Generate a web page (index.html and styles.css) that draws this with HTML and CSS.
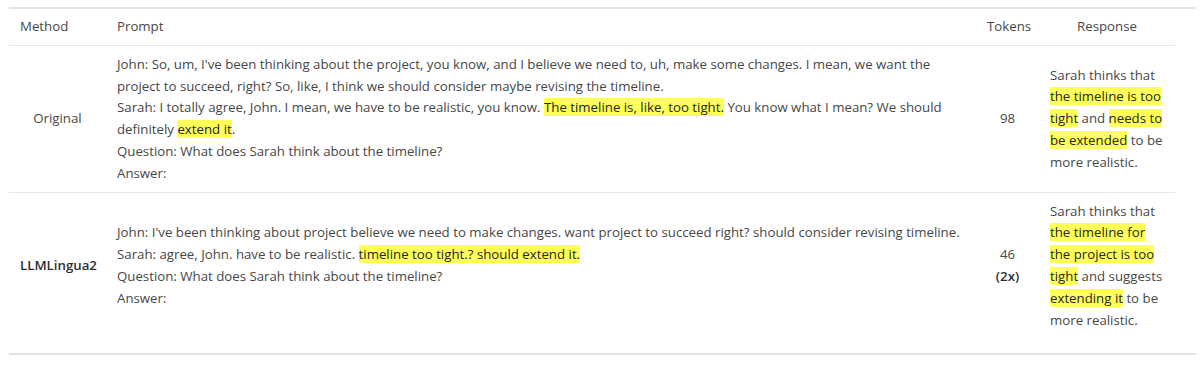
FILE: index.html
```html
<!DOCTYPE html>
<html>
<head>
<meta charset="utf-8">
<link rel="stylesheet" href="styles.css">
</head>
<body>
<div class="figure">
  <table class="cmp">
    <colgroup>
      <col class="c-method">
      <col class="c-prompt">
      <col class="c-tokens">
      <col class="c-resp">
    </colgroup>
    <thead>
      <tr>
        <th class="h-left">Method</th>
        <th class="h-left">Prompt</th>
        <th class="h-center">Tokens</th>
        <th class="h-center">Response</th>
      </tr>
    </thead>
    <tbody>
      <tr class="sep">
        <td class="method">Original</td>
        <td class="prompt">
          <div>John: So, um, I've been thinking about the project, you know, and I believe we need to, uh, make some changes. I mean, we want the project to succeed, right? So, like, I think we should consider maybe revising the timeline.</div>
          <div>Sarah: I totally agree, John. I mean, we have to be realistic, you know. <span class="hl">The timeline is, like, too tight.</span> You know what I mean? We should definitely <span class="hl">extend it</span>.</div>
          <div>Question: What does Sarah think about the timeline?</div>
          <div>Answer:</div>
        </td>
        <td class="tokens">98</td>
        <td class="resp">Sarah thinks that <span class="hl">the timeline is too tight</span> and <span class="hl">needs to be extended</span> to be more realistic.</td>
      </tr>
      <tr>
        <td class="method bold">LLMLingua2</td>
        <td class="prompt">
          <div>John: I've been thinking about project believe we need to make changes. want project to succeed right? should consider revising timeline.</div>
          <div>Sarah: agree, John. have to be realistic. <span class="hl">timeline too tight.? should extend it.</span></div>
          <div>Question: What does Sarah think about the timeline?</div>
          <div>Answer:</div>
        </td>
        <td class="tokens">46<br><b>(2x)</b></td>
        <td class="resp">Sarah thinks that <span class="hl">the timeline for the project is too tight</span> and suggests <span class="hl">extending it</span> to be more realistic.</td>
      </tr>
    </tbody>
  </table>
</div>
</body>
</html>
```

FILE: styles.css
```css
html, body {
  margin: 0;
  padding: 0;
  background: #ffffff;
}

body {
  font-family: "Open Sans", "Noto Sans", sans-serif;
  font-size: 13.25px;
  color: #474747;
}

.figure {
  width: 1187px;
  margin: 7px 0 0 9px;
  border-top: 2px solid #e3e3e3;
  border-bottom: 2px solid #e3e3e3;
  padding-bottom: 15px;
}

.cmp {
  width: 1166px;
  table-layout: fixed;
  border-collapse: collapse;
  border-spacing: 0;
}

.c-method { width: 97px; }
.c-prompt { width: 870px; }
.c-tokens { width: 63px; }
.c-resp { width: 136px; }

.cmp th,
.cmp td {
  padding: 8px 11px 7px;
  line-height: 21.8px;
  vertical-align: middle;
  font-weight: normal;
}

.cmp th {
  padding-top: 7px;
  padding-bottom: 7px;
}

.cmp thead tr {
  border-bottom: 1px solid #e8e8e8;
}

.cmp tr.sep {
  border-bottom: 1px solid #e8e8e8;
}

.h-left { text-align: left; }
.h-center { text-align: center; }

.method { text-align: center; }
.cmp td.bold { font-weight: 600; color: #2e2e2e; }
.tokens { text-align: center; }
.tokens b { font-weight: 600; color: #2e2e2e; }
.cmp td.resp { text-align: left; padding-right: 7px; }

.hl {
  background: #ffff5a;
  color: #262626;
}
```
